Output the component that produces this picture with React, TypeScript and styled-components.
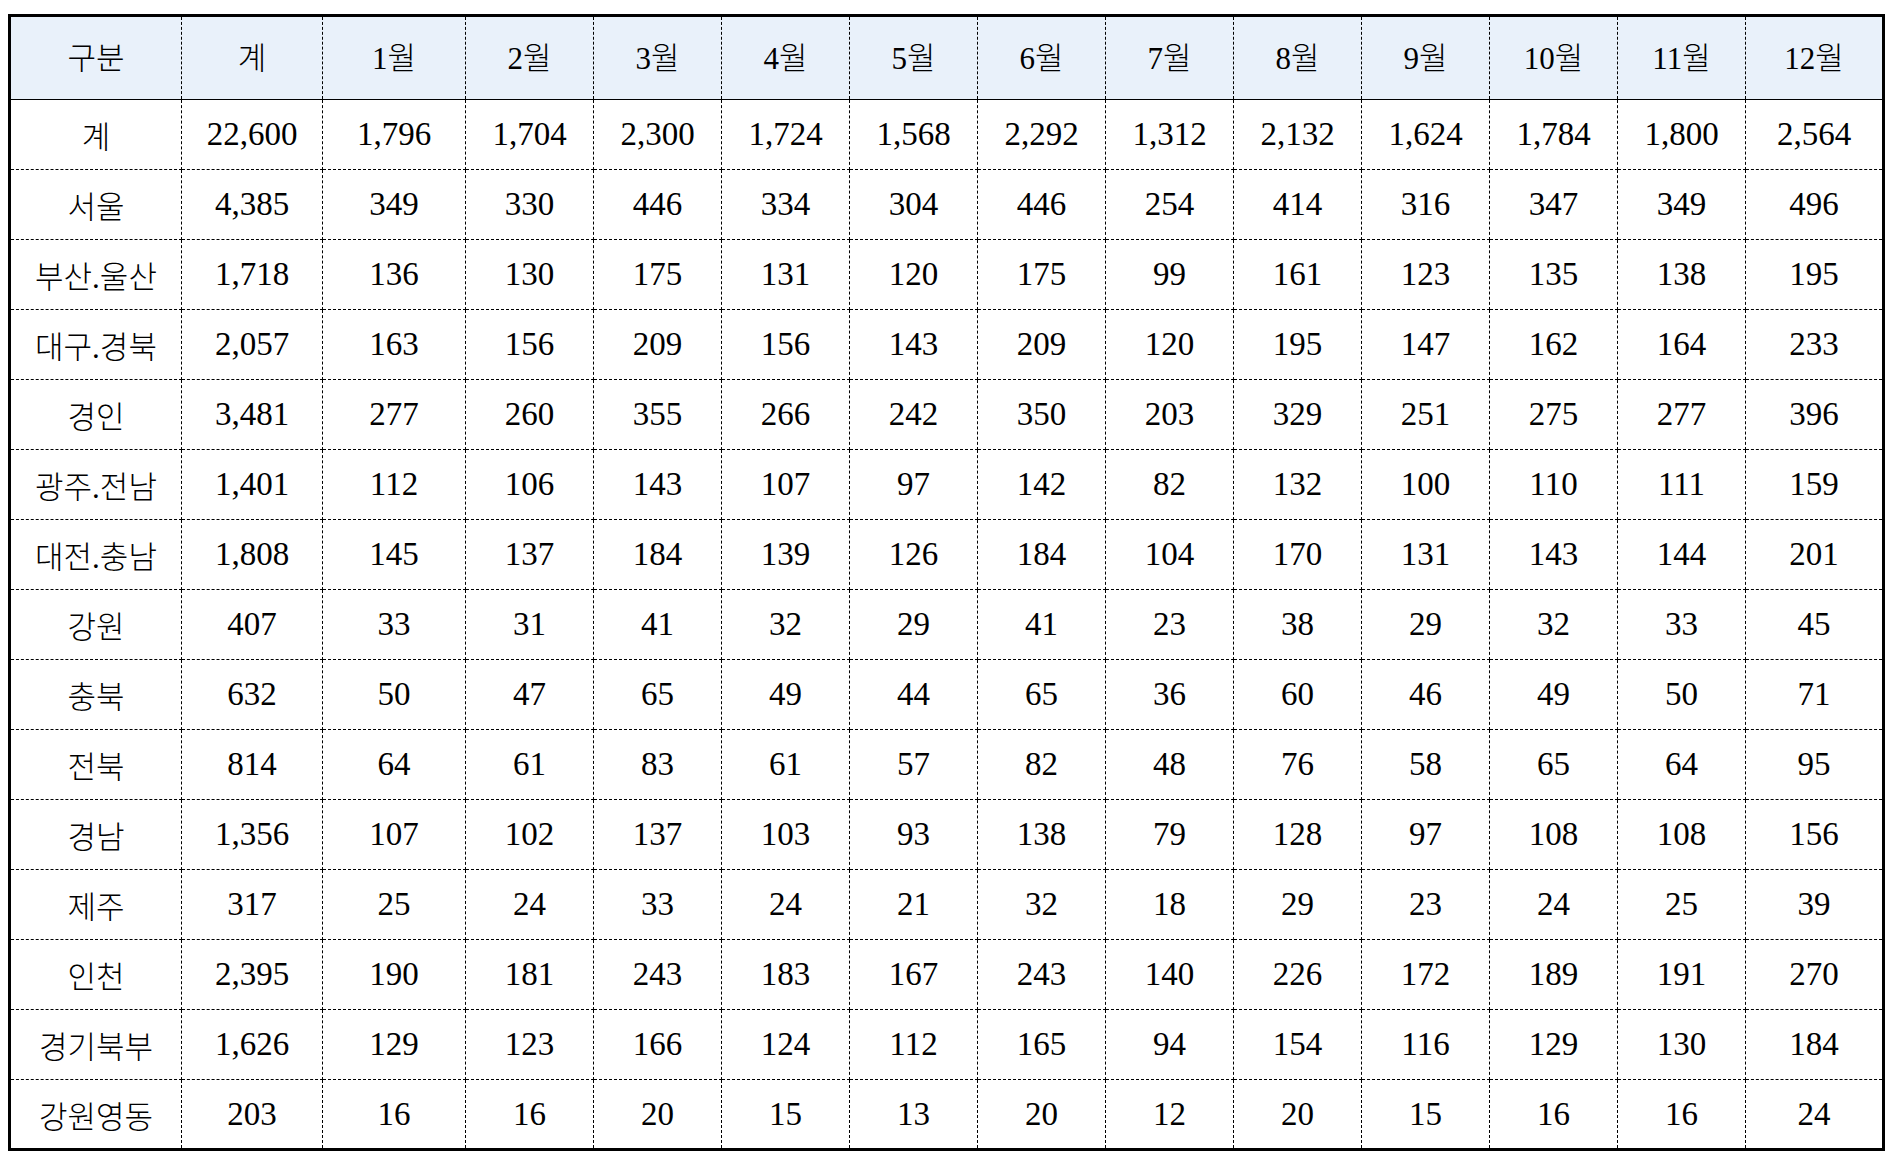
import styled, { createGlobalStyle } from "styled-components";

const GlobalStyle = createGlobalStyle`
  html, body {
    margin: 0;
    padding: 0;
    background: #fff;
  }
`;

const Page = styled.div`
  padding: 14px 0 0 8px;
`;

const Table = styled.table`
  width: 1874px;
  table-layout: fixed;
  border-collapse: collapse;
  border: 3px solid #000;
  font-family: "Liberation Serif", "Noto Sans CJK KR", serif;
  font-weight: 300;
  color: #000;
`;

const HeadRow = styled.tr`
  height: 84px;
  background: #e9f1fa;
`;

const BodyRow = styled.tr`
  height: 70px;
`;

const HeadCell = styled.th`
  font-weight: 300;
  font-size: 31px;
  text-align: center;
  vertical-align: middle;
  padding: 0 0 6px;
  border-bottom: 1px solid #000;
  border-right: 1px dashed #000;

  &:last-child {
    border-right: none;
  }
`;

const Cell = styled.td<{ $label?: boolean }>`
  font-size: ${(p) => (p.$label ? "31px" : "33px")};
  text-align: center;
  vertical-align: middle;
  padding: 0;
  white-space: nowrap;
  border-bottom: 1px dashed #000;
  border-right: 1px dashed #000;

  &:last-child {
    border-right: none;
  }
`;

const widths = [172, 141, 143, 128, 128, 128, 128, 128, 128, 128, 128, 128, 128, 138];

const months = Array.from({ length: 12 }, (_, i) => `${i + 1}월`);

const rows: [string, string[]][] = [
  ["계", ["22,600", "1,796", "1,704", "2,300", "1,724", "1,568", "2,292", "1,312", "2,132", "1,624", "1,784", "1,800", "2,564"]],
  ["서울", ["4,385", "349", "330", "446", "334", "304", "446", "254", "414", "316", "347", "349", "496"]],
  ["부산.울산", ["1,718", "136", "130", "175", "131", "120", "175", "99", "161", "123", "135", "138", "195"]],
  ["대구.경북", ["2,057", "163", "156", "209", "156", "143", "209", "120", "195", "147", "162", "164", "233"]],
  ["경인", ["3,481", "277", "260", "355", "266", "242", "350", "203", "329", "251", "275", "277", "396"]],
  ["광주.전남", ["1,401", "112", "106", "143", "107", "97", "142", "82", "132", "100", "110", "111", "159"]],
  ["대전.충남", ["1,808", "145", "137", "184", "139", "126", "184", "104", "170", "131", "143", "144", "201"]],
  ["강원", ["407", "33", "31", "41", "32", "29", "41", "23", "38", "29", "32", "33", "45"]],
  ["충북", ["632", "50", "47", "65", "49", "44", "65", "36", "60", "46", "49", "50", "71"]],
  ["전북", ["814", "64", "61", "83", "61", "57", "82", "48", "76", "58", "65", "64", "95"]],
  ["경남", ["1,356", "107", "102", "137", "103", "93", "138", "79", "128", "97", "108", "108", "156"]],
  ["제주", ["317", "25", "24", "33", "24", "21", "32", "18", "29", "23", "24", "25", "39"]],
  ["인천", ["2,395", "190", "181", "243", "183", "167", "243", "140", "226", "172", "189", "191", "270"]],
  ["경기북부", ["1,626", "129", "123", "166", "124", "112", "165", "94", "154", "116", "129", "130", "184"]],
  ["강원영동", ["203", "16", "16", "20", "15", "13", "20", "12", "20", "15", "16", "16", "24"]],
];

export default function App() {
  return (
    <>
      <GlobalStyle />
      <Page>
        <Table>
          <colgroup>
            {widths.map((w, i) => (
              <col key={i} style={{ width: w }} />
            ))}
          </colgroup>
          <thead>
            <HeadRow>
              <HeadCell>구분</HeadCell>
              <HeadCell>계</HeadCell>
              {months.map((m) => (
                <HeadCell key={m}>{m}</HeadCell>
              ))}
            </HeadRow>
          </thead>
          <tbody>
            {rows.map(([label, values]) => (
              <BodyRow key={label}>
                <Cell $label>{label}</Cell>
                {values.map((v, i) => (
                  <Cell key={i}>{v}</Cell>
                ))}
              </BodyRow>
            ))}
          </tbody>
        </Table>
      </Page>
    </>
  );
}
